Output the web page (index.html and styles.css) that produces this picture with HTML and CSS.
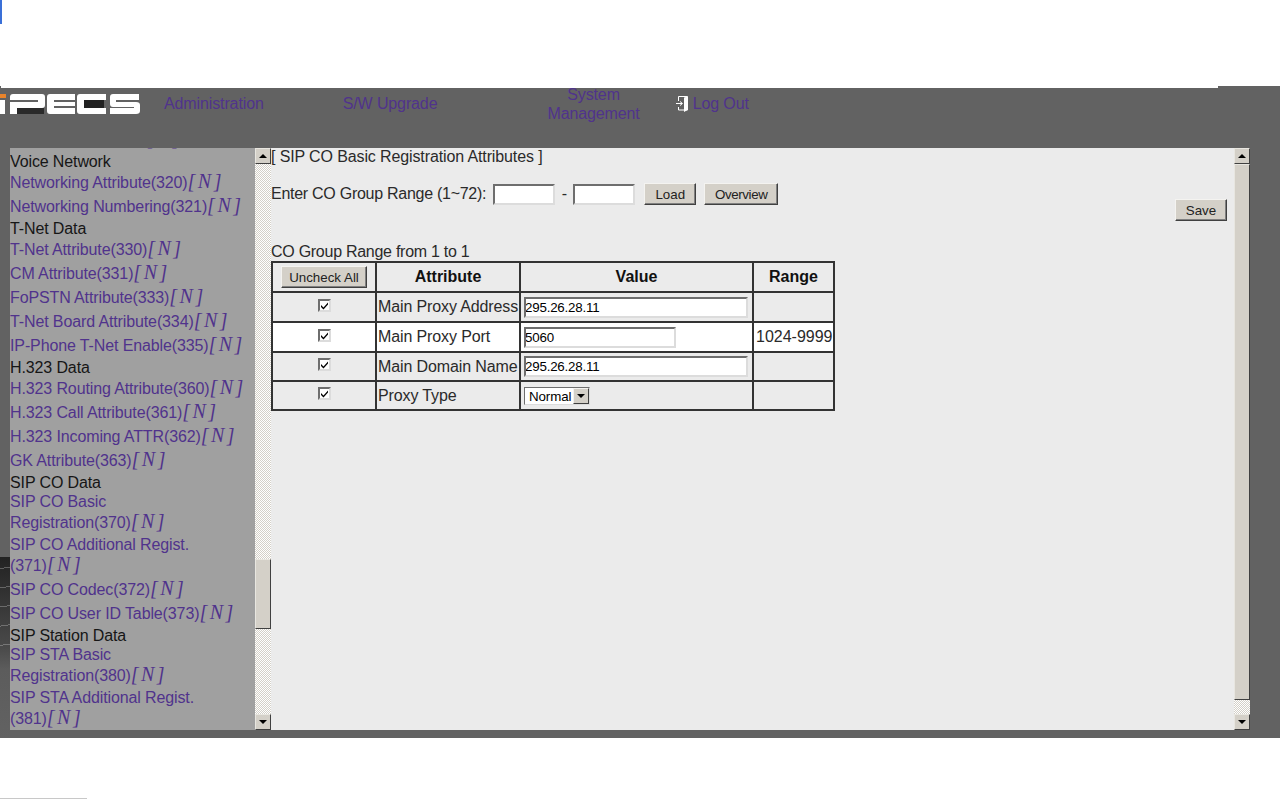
FILE: index.html
```html
<!DOCTYPE html>
<html lang="en">
<head>
<meta charset="utf-8">
<title>iPECS SIP CO Basic Registration Attributes</title>
<link rel="stylesheet" href="styles.css">
</head>
<body>
<div class="top"><span class="top-mark"></span></div>
<div class="frame">
  <div class="top-lip"></div>
  <span class="side-photo"></span>
  <nav class="nav">
    <svg class="logo" viewBox="0 0 140 20" width="140" height="20" role="img" aria-label="iPECS logo">
      <rect x="0" y="0" width="6" height="4" fill="#e8842c"/>
      <rect x="0" y="6" width="5" height="14" fill="#fff"/>
      <rect x="14" y="14" width="30" height="6" fill="#2a2a2a"/>
      <path d="M13 0H42Q45 0 45 3V11Q45 14 42 14H17V20H10V8H38V6H10V3Q10 0 13 0Z" fill="#fff"/>
      <path d="M50 0H75V6H54V8H75V12H54V14H75V20H50Q47 20 47 17V3Q47 0 50 0Z" fill="#fff"/>
      <rect x="84" y="6" width="20" height="8" fill="#222"/>
      <path d="M80 0H106V6H84V14H106V20H80Q77 20 77 17V3Q77 0 80 0Z" fill="#fff"/>
      <path d="M113 0H139V6H116V8H136Q140 8 140 11V17Q140 20 136 20H110V14H134V13H113Q110 13 110 10V3Q110 0 113 0Z" fill="#fff"/>
    </svg>
    <a class="nav-link nav-admin" href="#">Administration</a>
    <a class="nav-link nav-upgrade" href="#">S/W Upgrade</a>
    <a class="nav-link nav-system" href="#">System<br>Management</a>
    <a class="nav-link nav-logout" href="#">
      <svg class="door" viewBox="0 0 12 16" width="12" height="16" aria-hidden="true">
        <path d="M2.5 5V.5H11.5V14H2.5V11" fill="none" stroke="#fff"/>
        <path d="M8 1.5L11.5 .5V14L8 16Z" fill="#fff"/>
        <path d="M0 7.5H6M4 5.5L6.5 7.5L4 9.5" fill="none" stroke="#fff"/>
      </svg>
      <span>Log Out</span>
    </a>
  </nav>
  <div class="panes">
    <aside class="side">
      <div class="side-list">
        <div class="tree">
          <a href="#">VoIP Gateway(310)<span class="tag">[ N ]</span></a>
          <p class="group">Voice Network</p>
          <a href="#">Networking Attribute(320)<span class="tag">[ N ]</span></a>
          <a href="#">Networking Numbering(321)<span class="tag">[ N ]</span></a>
          <p class="group">T-Net Data</p>
          <a href="#">T-Net Attribute(330)<span class="tag">[ N ]</span></a>
          <a href="#">CM Attribute(331)<span class="tag">[ N ]</span></a>
          <a href="#">FoPSTN Attribute(333)<span class="tag">[ N ]</span></a>
          <a href="#">T-Net Board Attribute(334)<span class="tag">[ N ]</span></a>
          <a href="#">IP-Phone T-Net Enable(335)<span class="tag">[ N ]</span></a>
          <p class="group">H.323 Data</p>
          <a href="#">H.323 Routing Attribute(360)<span class="tag">[ N ]</span></a>
          <a href="#">H.323 Call Attribute(361)<span class="tag">[ N ]</span></a>
          <a href="#">H.323 Incoming ATTR(362)<span class="tag">[ N ]</span></a>
          <a href="#">GK Attribute(363)<span class="tag">[ N ]</span></a>
          <p class="group">SIP CO Data</p>
          <a href="#">SIP CO Basic<br>Registration(370)<span class="tag">[ N ]</span></a>
          <a href="#">SIP CO Additional Regist.<br>(371)<span class="tag">[ N ]</span></a>
          <a href="#">SIP CO Codec(372)<span class="tag">[ N ]</span></a>
          <a href="#">SIP CO User ID Table(373)<span class="tag">[ N ]</span></a>
          <p class="group">SIP Station Data</p>
          <a href="#">SIP STA Basic<br>Registration(380)<span class="tag">[ N ]</span></a>
          <a href="#">SIP STA Additional Regist.<br>(381)<span class="tag">[ N ]</span></a>
        </div>
      </div>
      <div class="scrollbar">
        <div class="sb-btn"><span class="arrow-up"></span></div>
        <div class="sb-track"></div>
        <div class="sb-thumb sb-thumb-side"></div>
        <div class="sb-track sb-track-short"></div>
        <div class="sb-btn"><span class="arrow-down"></span></div>
      </div>
    </aside>
    <main class="content">
      <div class="content-body">
        <p class="title">[ SIP CO Basic Registration Attributes ]</p>
        <div class="toolbar">
          <label class="range-label">Enter CO Group Range (1~72):</label>
          <input class="field range-field" type="text">
          <span class="dash">-</span>
          <input class="field range-field" type="text">
          <button class="btn btn-load">Load</button>
          <button class="btn btn-overview">Overview</button>
          <button class="btn btn-save">Save</button>
        </div>
        <p class="caption">CO Group Range from 1 to 1</p>
        <table class="grid">
          <colgroup>
            <col class="c1"><col class="c2"><col class="c3"><col class="c4">
          </colgroup>
          <tr>
            <th class="cell-btn"><button class="btn btn-uncheck">Uncheck All</button></th>
            <th>Attribute</th><th>Value</th><th>Range</th>
          </tr>
          <tr>
            <td class="cell-check"><span class="check"><svg viewBox="0 0 9 9" width="9" height="9"><path d="M1 4L3.5 6.5L8 1.5V3.5L3.5 8.5L1 6Z" fill="#000"/></svg></span></td>
            <td>Main Proxy Address</td>
            <td class="cell-value"><input class="field value-long" type="text" value="295.26.28.11"></td>
            <td></td>
          </tr>
          <tr class="row-white">
            <td class="cell-check"><span class="check"><svg viewBox="0 0 9 9" width="9" height="9"><path d="M1 4L3.5 6.5L8 1.5V3.5L3.5 8.5L1 6Z" fill="#000"/></svg></span></td>
            <td>Main Proxy Port</td>
            <td class="cell-value"><input class="field value-short" type="text" value="5060"></td>
            <td class="cell-range">1024-9999</td>
          </tr>
          <tr class="row-short">
            <td class="cell-check"><span class="check"><svg viewBox="0 0 9 9" width="9" height="9"><path d="M1 4L3.5 6.5L8 1.5V3.5L3.5 8.5L1 6Z" fill="#000"/></svg></span></td>
            <td>Main Domain Name</td>
            <td class="cell-value"><input class="field value-long" type="text" value="295.26.28.11"></td>
            <td></td>
          </tr>
          <tr class="row-short">
            <td class="cell-check"><span class="check"><svg viewBox="0 0 9 9" width="9" height="9"><path d="M1 4L3.5 6.5L8 1.5V3.5L3.5 8.5L1 6Z" fill="#000"/></svg></span></td>
            <td>Proxy Type</td>
            <td class="cell-value"><span class="select"><span class="select-text">Normal</span><span class="select-btn"><span class="arrow-down"></span></span></span></td>
            <td></td>
          </tr>
        </table>
      </div>
      <div class="scrollbar">
        <div class="sb-btn"><span class="arrow-up"></span></div>
        <div class="sb-thumb sb-thumb-main"></div>
        <div class="sb-track sb-track-main"></div>
        <div class="sb-btn"><span class="arrow-down"></span></div>
      </div>
    </main>
  </div>
</div>
<div class="bottom"><span class="bottom-line"></span></div>
</body>
</html>
```
FILE: styles.css
```css
* { box-sizing: border-box; }
html, body { margin: 0; padding: 0; height: 800px; overflow: hidden; background: #fff; }
body { font-family: "Liberation Sans", Arial, sans-serif; font-size: 16px; color: #2a2a2a; letter-spacing: -0.12px; }
a { color: #50338c; text-decoration: none; }
p { margin: 0; }

.top { height: 86px; position: relative; }
.top-mark { position: absolute; left: 0; top: 0; width: 2px; height: 24px; background: #3a70d8; }

.frame { height: 652px; background: #626262; position: relative; display: flex; flex-direction: column; }
.top-lip { position: absolute; left: 1px; top: 0; width: 1217px; height: 2px; background: #fff; }
.side-photo {
  position: absolute; left: 0; top: 471px; width: 10px; height: 181px;
  background:
    repeating-linear-gradient(172deg, transparent 0 11px, rgba(225,225,225,.3) 11px 12px, transparent 12px 19px) 0 0 / 10px 90px no-repeat,
    linear-gradient(#222 0, #4a4a4a 50%, #5c5c5c 62%, #626262 100%);
}

.nav { height: 62px; padding-bottom: 27px; display: flex; align-items: center; flex: none; }
.logo { display: block; flex: none; }
.nav-link { line-height: 19px; flex: none; }
.nav-admin { margin-left: 24px; }
.nav-upgrade { margin-left: 79px; }
.nav-system { margin-left: 110px; text-align: center; }
.nav-logout { margin-left: 36px; display: flex; align-items: center; gap: 5px; }
.door { display: block; flex: none; }

.panes { display: flex; height: 582px; margin-left: 10px; width: 1240px; }
.side { width: 261px; display: flex; flex: none; }
.side-list { width: 245px; background: #a0a0a0; overflow: hidden; }
.tree { margin-top: -20px; line-height: 19px; }
.tree a { display: block; }
.group { color: #161616; }
.tag {
  display: inline-block;
  font-family: "Liberation Serif", "Times New Roman", serif;
  font-style: italic; font-size: 20px; line-height: 20px; letter-spacing: 0;
  word-spacing: -2.5px; white-space: nowrap; margin-bottom: 4px;
}

.scrollbar { width: 16px; flex: none; display: flex; flex-direction: column; }
.sb-btn {
  height: 16px; flex: none; background: #d4d0c8;
  border: 1px solid; border-color: #e8e6e0 #404040 #404040 #e8e6e0;
  display: flex; align-items: center; justify-content: center;
}
.sb-track, .sb-track-short, .sb-track-main {
  background: repeating-conic-gradient(#d4d0c8 0 25%, #fff 0 50%) 0 0 / 2px 2px;
}
.sb-track { flex: 1; }
.sb-track-short { flex: none; height: 85px; }
.sb-track-main { flex: none; height: 14px; }
.sb-thumb { flex: none; background: #d4d0c8; border: 1px solid; border-color: #e8e6e0 #404040 #404040 #e8e6e0; }
.sb-thumb-side { height: 70px; }
.sb-thumb-main { flex: 1; }
.arrow-up, .arrow-down { width: 0; height: 0; border-left: 4px solid transparent; border-right: 4px solid transparent; display: block; }
.arrow-up { border-bottom: 4px solid #000; }
.arrow-down { border-top: 4px solid #000; }

.content { flex: 1; display: flex; min-width: 0; background: #ebebeb; }
.content-body { flex: 1; min-width: 0; padding-right: 7px; }
.title { line-height: 17px; }
.toolbar { display: flex; align-items: flex-start; margin-top: 18px; height: 38px; }
.range-label { line-height: 21px; margin-right: 7px; letter-spacing: -0.27px; }
.dash { width: 18px; text-align: center; line-height: 22px; }
.field {
  font-family: "Liberation Sans", Arial, sans-serif; font-size: 13.33px; color: #000;
  height: 21px; padding: 0; margin: 0; background: #fff; outline: none; border-radius: 0;
  border: 2px solid; border-color: #6e6e6e #dcdcdc #dcdcdc #6e6e6e;
  letter-spacing: -0.2px; text-indent: -1px;
}
.range-field { width: 62px; margin-top: 1px; }
.btn {
  font-family: "Liberation Sans", Arial, sans-serif; font-size: 13.33px; color: #222;
  height: 22px; padding: 0; background: #d4d0c8; border-radius: 0;
  border: 1px solid; border-color: #f4f3f0 #404040 #404040 #f4f3f0;
  box-shadow: inset -1px -1px 0 #808080;
}
.btn-load { width: 52px; margin-left: 9px; }
.btn-overview { width: 74px; margin-left: 8px; letter-spacing: -0.4px; }
.btn-save { width: 52px; margin-left: auto; margin-top: 16px; }
.caption { margin-top: 21px; line-height: 19px; height: 19px; letter-spacing: -0.27px; }

.grid { border-collapse: collapse; table-layout: fixed; width: 562px; }
.c1 { width: 104px; } .c2 { width: 144px; } .c3 { width: 233px; } .c4 { width: 81px; }
.grid th, .grid td { border: 2px solid #333; height: 30px; padding: 0 1px; white-space: nowrap; font-size: 16px; text-align: left; }
.grid th { text-align: center; font-weight: bold; color: #111; letter-spacing: 0; }
.row-short td { height: 29px !important; }
.row-white td { background: #fff; }
.grid .cell-range { padding-left: 2px; letter-spacing: 0; }
.cell-btn { padding: 0 !important; }
.btn-uncheck { width: 86px; height: 22px; display: block; margin: 0 auto; letter-spacing: 0; }
.cell-check { text-align: center !important; }
.cell-value { padding-left: 3px !important; }
.cell-value .field { display: block; }
.value-long { width: 224px; }
.value-short { width: 152px; }
.check {
  display: flex; width: 13px; height: 13px; background: #fff; align-items: center; justify-content: center;
  border: 2px solid; border-color: #6e6e6e #dcdcdc #dcdcdc #6e6e6e; margin: 0 auto 4px;
}
.check svg { display: block; flex: none; }
.select {
  display: flex; align-items: center; justify-content: space-between; width: 66px; height: 18px; margin-top: 1px;
  background: #fff; border: 1px solid; border-color: #6e6e6e #dcdcdc #dcdcdc #6e6e6e;
  font-size: 13.33px; color: #000; letter-spacing: -0.1px;
}
.select-text { padding-left: 4px; }
.select-btn {
  width: 16px; height: 16px; background: #d4d0c8; flex: none;
  border: 1px solid; border-color: #f4f3f0 #404040 #404040 #f4f3f0;
  display: flex; align-items: center; justify-content: center;
}

.bottom { height: 62px; position: relative; }
.bottom-line { position: absolute; left: 0; bottom: 1px; width: 87px; height: 1px; background: #c8c8c8; }
```
